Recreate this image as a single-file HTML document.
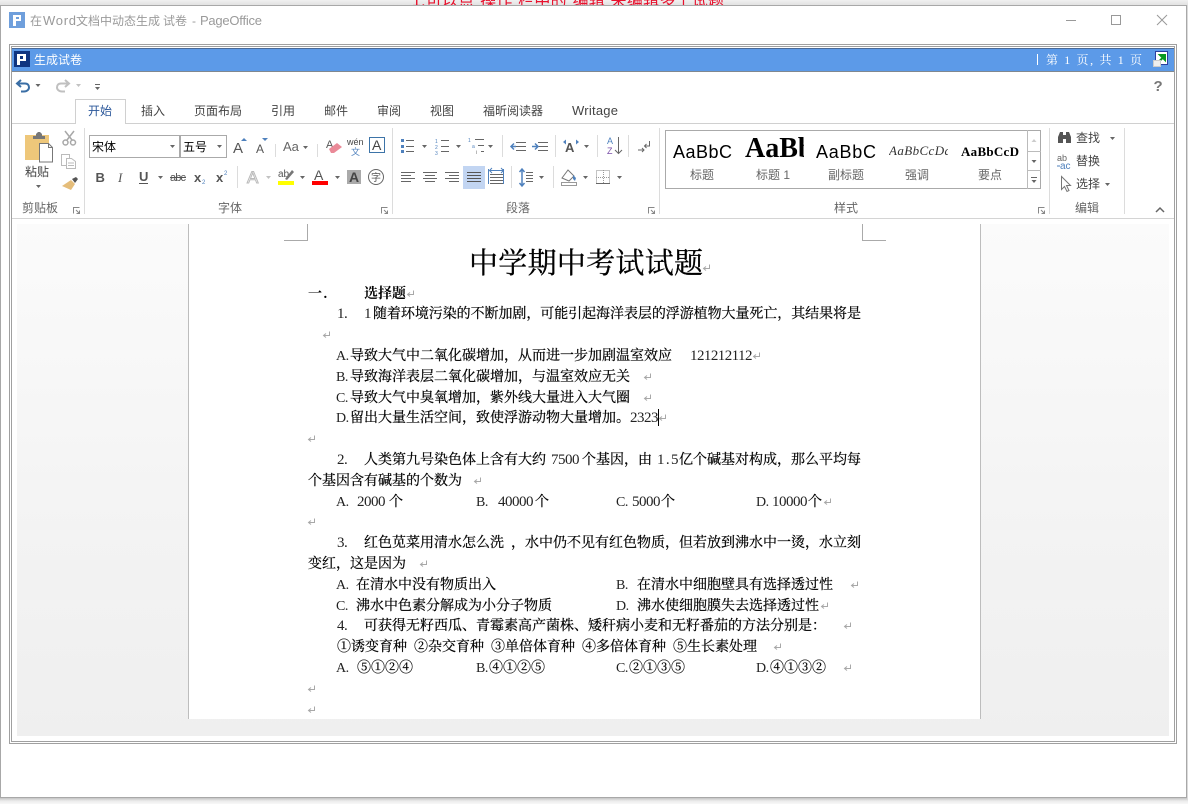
<!DOCTYPE html>
<html lang="zh"><head><meta charset="utf-8"><title>在Word文档中动态生成 试卷 - PageOffice</title>
<style>
html,body{margin:0;padding:0;background:#fff;overflow:hidden;width:1188px;height:804px}
svg{display:block}
.ui{font-family:"Liberation Sans","Noto Sans CJK SC",sans-serif;font-size:12px;fill:#444}
.g{font-family:"Liberation Sans","Noto Sans CJK SC",sans-serif;font-size:12px;fill:#666}
.d{font-family:"Noto Serif CJK SC",serif;font-size:14px;fill:#000;stroke:#000;stroke-width:.22px;white-space:pre}
.b{font-family:"Noto Serif CJK SC",serif;font-size:14px;font-weight:700;fill:#000}
.m{font-family:"Liberation Serif",serif;font-size:14px;letter-spacing:-.5px;fill:#222}
.n{font-family:"Liberation Serif",serif;font-size:15px;letter-spacing:-.5px;fill:#222}
.cr{shape-rendering:crispEdges}
</style></head><body>
<svg width="1188" height="804" viewBox="0 0 1188 804" xmlns="http://www.w3.org/2000/svg">
<defs>
<linearGradient id="top" x1="0" y1="0" x2="0" y2="1"><stop offset="0" stop-color="#f0f0f0"/><stop offset="1" stop-color="#e2e2e2"/></linearGradient>
<linearGradient id="bot" x1="0" y1="0" x2="0" y2="1"><stop offset="0" stop-color="#c4c4c4"/><stop offset=".5" stop-color="#ececec"/><stop offset="1" stop-color="#f8f8f8"/></linearGradient>
<linearGradient id="rgt" x1="0" y1="0" x2="1" y2="0"><stop offset="0" stop-color="#c8c8c8"/><stop offset="1" stop-color="#eeeeee"/></linearGradient>
<linearGradient id="doc" x1="0" y1="0" x2="0" y2="1"><stop offset="0" stop-color="#fbfbfb"/><stop offset=".6" stop-color="#f3f3f3"/><stop offset="1" stop-color="#efefef"/></linearGradient>
<path id="a" d="M0 0h5l-2.500 3z" fill="#666"/>
<path id="r" d="M6.500 .5v4h-6M3 2.500l-2.500 2 2.500 2" fill="none" stroke="#a8a8a8" stroke-width="1"/>
<path id="l" d="M.5 6.500v-6h6M3 3l3 3M6.500 3.500v3h-3" fill="none" stroke="#888" stroke-width="1"/>
</defs>

<!-- backdrop -->
<rect width="1188" height="804" fill="#fff"/>
<rect width="1188" height="5" fill="url(#top)"/>
<text x="412" y="6" font-family="Liberation Sans,Noto Sans CJK SC,sans-serif" font-size="16" fill="#e8112d" textLength="312">1.可以点“操作”栏中的“编辑”来编辑多个试题</text>
<rect x="0" y="798" width="1188" height="6" fill="url(#bot)"/>
<rect x="1187" y="5" width="1" height="795" fill="url(#rgt)"/>

<!-- window -->
<rect x=".5" y="5.500" width="1186" height="792" fill="#fff" stroke="#a8a8a8" class="cr"/>
<rect x="9" y="12" width="16" height="16" fill="#6f9fdc" class="cr"/>
<path d="M13 15h8v6h-5v5h-3z" fill="#fff" class="cr"/><rect x="16" y="17" width="3" height="2" fill="#6f9fdc" class="cr"/>
<g font-family="Liberation Sans,Noto Sans CJK SC,sans-serif" font-size="12" fill="#9a9a9a">
<text x="30" y="25">在</text><text x="43" y="25" font-size="13" textLength="33">Word</text><text x="76" y="25">文档中动态生成</text><text x="163" y="25">试卷</text><text x="192" y="25">-</text><text x="200" y="25" font-size="13" textLength="62">PageOffice</text>
</g>
<path d="M1066 20.500h10" stroke="#999" class="cr"/>
<rect x="1111.500" y="15.500" width="9" height="9" fill="none" stroke="#999" class="cr"/>
<path d="M1157 15l10 10M1167 15l-10 10" stroke="#999" stroke-width="1"/>

<!-- frame -->
<rect x="9.500" y="44.500" width="1167" height="699" fill="#fff" stroke="#a0a0a0" class="cr"/>
<rect x="11.500" y="46.500" width="1163" height="695" fill="#fff" stroke="#a0a0a0" class="cr"/>

<!-- blue bar -->
<rect x="12" y="48" width="1162" height="23" fill="#5c9ae8" class="cr"/>
<rect x="12" y="48" width="1162" height="1" fill="#4a6a98" class="cr"/>
<rect x="12" y="71" width="1162" height="1" fill="#808890" class="cr"/>
<rect x="14" y="51" width="16" height="16" fill="#0f3480" class="cr"/>
<path d="M17 54h9v7h-6v4h-3z" fill="#fff" class="cr"/><rect x="20" y="56" width="3" height="3" fill="#0f3480" class="cr"/>
<text x="34" y="64" font-family="Liberation Sans,Noto Sans CJK SC,sans-serif" font-size="12" fill="#fff">生成试卷</text>
<rect x="1037" y="54" width="1" height="11" fill="#fff" class="cr"/>
<text x="1046" y="64" font-family="Liberation Serif,Noto Serif CJK SC,serif" font-size="12" fill="#fff" textLength="96" xml:space="preserve">第 1 页, 共 1 页</text>
<rect x="1155.500" y="51.500" width="12" height="13" fill="#fff" stroke="#2a3f9f" class="cr"/>
<path d="M1158.500 62l5-5M1160 55h5v5z" stroke="#0a9a20" stroke-width="2" fill="#0a9a20"/>
<rect x="1153.500" y="60.500" width="7" height="6" fill="#eee" stroke="#ccc" class="cr"/>

<!-- QAT -->
<path d="M21 80l-4 3.500 4 3.500M17 83.500h8c3 0 4 2 4 4s-2 4-5 4h-3" fill="none" stroke="#3a6ea5" stroke-width="2"/>
<use href="#a" x="35.500" y="84"/>
<path d="M65 80l4 3.500-4 3.500M69 83.500h-8c-3 0-4 2-4 4s2 4 5 4h3" fill="none" stroke="#c0c0c0" stroke-width="2"/>
<use href="#a" x="76" y="84" opacity=".4"/>
<rect x="95" y="84" width="5" height="1" fill="#666" class="cr"/><use href="#a" x="95" y="87"/>
<text x="1153.500" y="91" font-family="Liberation Sans,sans-serif" font-size="15" font-weight="700" fill="#777">?</text>

<!-- tabs -->
<path d="M12 123.500h63.500v-24h50v24H1174" fill="none" stroke="#d0d0d0" class="cr"/>
<text x="88" y="115" class="ui" style="fill:#2b579a">开始</text>
<text x="141" y="115" class="ui">插入</text>
<text x="194" y="115" class="ui">页面布局</text>
<text x="271" y="115" class="ui">引用</text>
<text x="324" y="115" class="ui">邮件</text>
<text x="377" y="115" class="ui">审阅</text>
<text x="430" y="115" class="ui">视图</text>
<text x="483" y="115" class="ui">福昕阅读器</text>
<text x="572" y="115" class="ui" style="font-size:13px" textLength="46">Writage</text>

<!-- ribbon separators -->
<g fill="#dcdcdc" class="cr">
<rect x="84" y="128" width="1" height="86"/><rect x="392" y="128" width="1" height="86"/><rect x="659" y="128" width="1" height="86"/><rect x="1049" y="128" width="1" height="86"/><rect x="1124" y="128" width="1" height="86"/>
<rect x="275" y="144" width="1" height="13"/><rect x="317" y="144" width="1" height="13"/>
<rect x="237" y="166" width="1" height="22"/>
<rect x="502" y="135" width="1" height="22"/><rect x="555" y="135" width="1" height="22"/><rect x="597" y="135" width="1" height="22"/><rect x="628" y="135" width="1" height="22"/>
<rect x="511" y="166" width="1" height="22"/><rect x="553" y="166" width="1" height="22"/>
</g>
<rect x="12" y="218" width="1162" height="1" fill="#d4d4d4" class="cr"/>

<!-- clipboard -->
<path d="M25 135h24v25H25z" fill="#eec77a" class="cr"/>
<path d="M33 136h3v-2l2-2h2l2 2v2h3v3H33z" fill="#777"/>
<path d="M39.500 143.500h9l4 4v14.500h-13z" fill="#fff" stroke="#777"/>
<path d="M48.500 143.500v4h4" fill="none" stroke="#777"/>
<text x="25" y="176" class="ui">粘贴</text>
<use href="#a" x="36" y="185"/>
<g fill="none" stroke="#a8a8a8" stroke-width="1.500">
<path d="M65 131l7 9M74 131l-7 9"/><circle cx="65.500" cy="142.500" r="2.500"/><circle cx="73" cy="142.500" r="2.500"/>
</g>
<g fill="#fff" stroke="#bbb"><path d="M61.500 154.500h8v11h-8z"/><path d="M66.500 158.500h5l4 3v7h-9z"/><path d="M68 163h6M68 165.500h6" fill="none"/></g>
<path d="M72 179l4-2 2 2-3 4z" fill="#555"/><path d="M71 180l4 4-4 6-9-4z" fill="#e5bd7a"/>
<text x="22" y="212" class="g">剪贴板</text><use href="#l" x="73" y="207"/>

<!-- font -->
<rect x="89.500" y="135.500" width="90" height="22" fill="#fff" stroke="#aaa" class="cr"/>
<rect x="180.500" y="135.500" width="46" height="22" fill="#fff" stroke="#aaa" class="cr"/>
<text x="92" y="151" font-family="Noto Sans CJK SC,sans-serif" font-size="12" fill="#000">宋体</text>
<text x="183" y="151" font-family="Noto Sans CJK SC,sans-serif" font-size="12" fill="#000">五号</text>
<use href="#a" x="170" y="145"/><use href="#a" x="217" y="145"/>
<text x="233" y="153" font-family="Liberation Sans,sans-serif" font-size="15" fill="#555">A</text>
<path d="M241 141l3-3 3 3z" fill="#4f81bd"/>
<text x="256" y="153" font-family="Liberation Sans,sans-serif" font-size="12" fill="#555">A</text>
<path d="M262 138h6l-3 3z" fill="#4f81bd"/>
<text x="283" y="151" font-family="Liberation Sans,sans-serif" font-size="13" fill="#666">Aa</text><use href="#a" x="303" y="146"/>
<text x="326" y="148" font-family="Liberation Sans,sans-serif" font-size="11" fill="#555">A</text>
<path d="M329 149l8-6 5 4-8 6h-3z" fill="#ea8a98"/>
<text x="347" y="145" font-family="Liberation Sans,sans-serif" font-size="9" fill="#444">wén</text>
<text x="351" y="155" font-family="Noto Sans CJK SC,sans-serif" font-size="9" fill="#4f81bd">文</text>
<rect x="369.500" y="137.500" width="15" height="15" fill="#fff" stroke="#3d74a8" class="cr"/>
<text x="372" y="150" font-family="Liberation Sans,sans-serif" font-size="14" fill="#444">A</text>

<text x="95.500" y="182" font-family="Liberation Sans,sans-serif" font-size="13" font-weight="700" fill="#555">B</text>
<text x="118" y="182" font-family="Liberation Serif,serif" font-size="13" font-style="italic" fill="#555">I</text>
<text x="139" y="181" font-family="Liberation Sans,sans-serif" font-size="13" font-weight="700" fill="#555">U</text>
<rect x="139" y="183" width="9" height="1" fill="#555" class="cr"/>
<use href="#a" x="158" y="176"/>
<text x="170" y="181" font-family="Liberation Sans,sans-serif" font-size="11" fill="#555" textLength="16">abc</text>
<rect x="170" y="177" width="16" height="1" fill="#555" class="cr"/>
<text x="194" y="182" font-family="Liberation Sans,sans-serif" font-size="13" font-weight="700" fill="#555">x</text>
<text x="202" y="184" font-family="Liberation Sans,sans-serif" font-size="6" fill="#4f81bd">2</text>
<text x="216" y="182" font-family="Liberation Sans,sans-serif" font-size="13" font-weight="700" fill="#555">x</text>
<text x="224" y="175" font-family="Liberation Sans,sans-serif" font-size="6" fill="#4f81bd">2</text>
<text x="247" y="183" font-family="Liberation Sans,sans-serif" font-size="17" fill="#fff" stroke="#bbb" stroke-width="1">A</text>
<use href="#a" x="266" y="176" opacity=".4"/>
<text x="278" y="177" font-family="Liberation Sans,sans-serif" font-size="10" fill="#555">ab</text>
<path d="M285 179l7-9 2 2-7 8z" fill="#777"/>
<rect x="278" y="181" width="16" height="4" fill="#ff0" class="cr"/>
<use href="#a" x="300" y="176"/>
<text x="314" y="180" font-family="Liberation Sans,sans-serif" font-size="14" fill="#555">A</text>
<rect x="312" y="181" width="16" height="4" fill="#f00" class="cr"/>
<use href="#a" x="335" y="176"/>
<rect x="347" y="170" width="14" height="14" fill="#aaa" class="cr"/>
<text x="349" y="182" font-family="Liberation Sans,sans-serif" font-size="14" font-weight="700" fill="#444">A</text>
<circle cx="376" cy="177" r="7.500" fill="none" stroke="#666"/>
<text x="371" y="181" font-family="Noto Sans CJK SC,sans-serif" font-size="10" fill="#555">字</text>
<text x="218" y="212" class="g">字体</text><use href="#l" x="381" y="207"/>

<!-- paragraph -->
<g class="cr">
<g fill="#4f81bd"><rect x="401" y="139" width="3" height="3"/><rect x="401" y="145" width="3" height="3"/><rect x="401" y="150" width="3" height="3"/></g>
<path d="M406 140.500h8M406 146.500h8M406 151.500h8" stroke="#666"/>
<path d="M441 140.500h8M441 146.500h8M441 151.500h8" stroke="#666"/>
<path d="M475 139.500h9M478 145.500h6M481 151.500h3" stroke="#666"/>
</g>
<use href="#a" x="422" y="145"/><use href="#a" x="456" y="145"/><use href="#a" x="488" y="145"/>
<g font-family="Liberation Sans,sans-serif" font-size="5" fill="#4f81bd"><text x="435" y="143">1</text><text x="435" y="149">2</text><text x="435" y="155">3</text><text x="468" y="142">1</text><text x="472" y="148">a</text><text x="476" y="154" fill="#666">i</text></g>
<path d="M516 142.500h10M516 146.500h10M516 150.500h10M538 142.500h10M538 146.500h10M538 150.500h10" stroke="#666" class="cr"/>
<path d="M516 146.500h-5M514 143.500l-3 3 3 3M532 146.500h6M535 143.500l3 3-3 3" fill="none" stroke="#4f81bd" stroke-width="1.500"/>
<text x="565" y="152" font-family="Liberation Sans,sans-serif" font-size="13" font-weight="700" fill="#555">A</text>
<path d="M563 142l3-2.500v5zM579 142l-3-2.500v5z" fill="#4f81bd"/>
<use href="#a" x="584" y="145"/>
<text x="607" y="144" font-family="Liberation Sans,sans-serif" font-size="9" fill="#4f81bd">A</text>
<text x="607" y="154" font-family="Liberation Sans,sans-serif" font-size="9" fill="#7a4fa8">Z</text>
<path d="M618.500 137v16M615 150l3.500 3.500 3.500-3.500" fill="none" stroke="#666"/>
<path d="M649.500 141v5h-5M646.500 144l-2 2 2 2M638 150h6M642 148l2 2-2 2" fill="none" stroke="#666"/>

<path d="M401 172.500h14M401 175.500h10M401 178.500h14M401 181.500h10" stroke="#666" class="cr"/>
<path d="M423 172.500h14M425 175.500h10M423 178.500h14M425 181.500h10" stroke="#666" class="cr"/>
<path d="M445 172.500h14M449 175.500h10M445 178.500h14M449 181.500h10" stroke="#666" class="cr"/>
<rect x="463" y="166" width="22" height="23" fill="#c2d5f2" class="cr"/>
<path d="M467 172.500h14M467 175.500h14M467 178.500h14M467 181.500h14" stroke="#555" class="cr"/>
<path d="M488.500 169v15M503.500 169v15" stroke="#4f81bd" class="cr"/>
<path d="M490 170.500h13M492 168l-2.500 2.500 2.500 2.500M501 168l2.500 2.500-2.500 2.500" fill="none" stroke="#4f81bd"/>
<path d="M490 174.500h13M490 177.500h13M490 180.500h13M490 183.500h13" stroke="#666" class="cr"/>
<path d="M522 170v15M519.500 172l2.500-3 2.500 3M519.500 183l2.500 3 2.500-3" fill="none" stroke="#4f81bd" stroke-width="1.500"/>
<path d="M526 172.500h7M526 175.500h7M526 178.500h7M526 181.500h7" stroke="#666" class="cr"/>
<use href="#a" x="539" y="176"/>
<path d="M562 178l6-8 6 6-5 5z" fill="#fff" stroke="#777"/><path d="M573 175l3 3-1 3-2-2z" fill="#4f81bd"/>
<rect x="561.500" y="182.500" width="15" height="3" fill="#fff" stroke="#999" class="cr"/>
<use href="#a" x="583" y="176"/>
<rect x="596.500" y="170.500" width="13" height="13" fill="none" stroke="#888" stroke-dasharray="1 1" class="cr"/>
<path d="M603.500 170v14M596 177.500h14" stroke="#999" stroke-dasharray="1 1" class="cr"/>
<path d="M596 183.500h14" stroke="#666" class="cr"/>
<use href="#a" x="617" y="176"/>
<text x="506" y="212" class="g">段落</text><use href="#l" x="648" y="207"/>

<!-- styles -->
<rect x="665.500" y="130.500" width="375" height="58" fill="#fff" stroke="#aaa" class="cr"/>
<path d="M1027.500 130v59M1028 151.500h13M1028 170.500h13" stroke="#bbb" class="cr"/>
<path d="M1031.500 142l2.500-3 2.500 3z" fill="#ccc"/><use href="#a" x="1031.500" y="160"/>
<rect x="1031" y="177" width="6" height="1" fill="#666" class="cr"/><use href="#a" x="1031.500" y="180"/>
<text x="673" y="158" font-family="Liberation Sans,sans-serif" font-size="18" fill="#000" textLength="59">AaBbC</text>
<svg x="745" y="130" width="59" height="40"><text x="0" y="27" font-family="Liberation Serif,serif" font-size="28" font-weight="700" fill="#000">AaBbC</text></svg>
<text x="816" y="158" font-family="Liberation Sans,sans-serif" font-size="18" fill="#000" textLength="60">AaBbC</text>
<svg x="889" y="130" width="59" height="40"><text x="0" y="25" font-family="Liberation Serif,serif" font-size="13" font-style="italic" fill="#333" textLength="62">AaBbCcDd</text></svg>
<text x="961" y="156" font-family="Liberation Serif,serif" font-size="13" font-weight="700" fill="#000" textLength="58">AaBbCcD</text>
<text x="690" y="179" class="g">标题</text>
<text x="756" y="179" class="g">标题 1</text>
<text x="828" y="179" class="g">副标题</text>
<text x="905" y="179" class="g">强调</text>
<text x="978" y="179" class="g">要点</text>
<text x="834" y="212" class="g">样式</text><use href="#l" x="1038" y="207"/>

<!-- editing -->
<path d="M1058 143v-6l2-5h3v11zM1066 143v-11h3l2 5v6zM1063 135h3v4h-3z" fill="#555"/>
<text x="1076" y="142" class="ui">查找</text><use href="#a" x="1110" y="137"/>
<text x="1057" y="161" font-family="Liberation Sans,sans-serif" font-size="9" fill="#666">ab</text>
<text x="1060" y="169" font-family="Liberation Sans,sans-serif" font-size="10" fill="#4f81bd">ac</text>
<path d="M1057 166h3" stroke="#4f81bd"/>
<text x="1076" y="165" class="ui">替换</text>
<path d="M1061.500 176.500v13l3-3 2.500 5 2-1-2.500-5h4z" fill="#fff" stroke="#777"/>
<text x="1076" y="188" class="ui">选择</text><use href="#a" x="1105" y="183"/>
<text x="1075" y="212" class="g">编辑</text>
<path d="M1156 212l4-4 4 4" fill="none" stroke="#666" stroke-width="1.500"/>

<!-- document background -->
<rect x="17" y="224" width="1152" height="512" fill="url(#doc)" class="cr"/>
<rect x="189" y="219" width="791" height="500" fill="#fff" class="cr"/>
<rect x="188" y="224" width="1" height="495" fill="#bdbdbd" class="cr"/>
<rect x="980" y="224" width="1" height="495" fill="#bdbdbd" class="cr"/>
<path d="M284 240.500h23.500V224M886 240.500h-23.500V224" fill="none" stroke="#aaa" class="cr"/>

<!-- document text -->
<text x="469" y="273" font-family="Noto Serif CJK SC,serif" font-size="29" fill="#000" stroke="#000" stroke-width=".3" textLength="234">中学期中考试试题</text><use href="#r" x="703" y="264"/>
<text x="308" y="298" class="b">一</text><text x="323" y="298" class="b">.</text>
<text x="364" y="298" class="b">选择题</text><use href="#r" x="407" y="290"/>

<text x="337" y="318" class="n">1.</text>
<text x="364" y="318" class="n">1</text>
<text x="373" y="318" class="d" textLength="488">随着环境污染的不断加剧，可能引起海洋表层的浮游植物大量死亡，其结果将是</text>
<use href="#r" x="323" y="331"/>

<text x="336" y="360" class="m">A.</text><text x="350" y="360" class="d">导致大气中二氧化碳增加，从而进一步加剧温室效应</text>
<text x="690" y="360" class="n" textLength="62">121212112</text><use href="#r" x="753" y="352"/>
<text x="336" y="381" class="m">B.</text><text x="350" y="381" class="d">导致海洋表层二氧化碳增加，与温室效应无关</text><use href="#r" x="644" y="373"/>
<text x="336" y="402" class="m">C.</text><text x="350" y="402" class="d">导致大气中臭氧增加，紫外线大量进入大气圈</text><use href="#r" x="644" y="394"/>
<text x="336" y="422" class="m">D.</text><text x="350" y="422" class="d">留出大量生活空间，致使浮游动物大量增加。</text><text x="630" y="422" class="n" textLength="28">2323</text>
<rect x="658" y="409" width="1" height="17" fill="#000" class="cr"/><use href="#r" x="659" y="414"/>
<use href="#r" x="308" y="435"/>

<text x="337" y="464" class="n">2.</text>
<text x="364" y="464" class="d">人类第九号染色体上含有大约</text><text x="551" y="464" class="n" textLength="28">7500</text>
<text x="582" y="464" class="d">个基因，由</text><text x="657" y="464" class="n" textLength="21">1.5</text>
<text x="679" y="464" class="d">亿个碱基对构成，那么平均每</text>
<text x="308" y="485" class="d">个基因含有碱基的个数为</text><use href="#r" x="474" y="477"/>
<text x="336" y="506" class="m">A.</text><text x="357" y="506" class="n" textLength="28">2000</text><text x="389" y="506" class="d">个</text>
<text x="476" y="506" class="m">B.</text><text x="498" y="506" class="n" textLength="35">40000</text><text x="535" y="506" class="d">个</text>
<text x="616" y="506" class="m">C.</text><text x="632" y="506" class="n" textLength="28">5000</text><text x="661" y="506" class="d">个</text>
<text x="756" y="506" class="m">D.</text><text x="772" y="506" class="n" textLength="35">10000</text><text x="808" y="506" class="d">个</text><use href="#r" x="824" y="498"/>
<use href="#r" x="308" y="518"/>

<text x="337" y="547" class="n">3.</text>
<text x="364" y="547" class="d">红色苋菜用清水怎么洗</text><text x="511" y="547" class="d">，水中仍不见有红色物质，但若放到沸水中一烫，水立刻</text>
<text x="308" y="568" class="d">变红，这是因为</text><use href="#r" x="420" y="560"/>
<text x="336" y="589" class="m">A.</text><text x="356" y="589" class="d">在清水中没有物质出入</text>
<text x="616" y="589" class="m">B.</text><text x="637" y="589" class="d">在清水中细胞壁具有选择透过性</text><use href="#r" x="851" y="581"/>
<text x="336" y="610" class="m">C.</text><text x="356" y="610" class="d">沸水中色素分解成为小分子物质</text>
<text x="616" y="610" class="m">D.</text><text x="637" y="610" class="d">沸水使细胞膜失去选择透过性</text><use href="#r" x="821" y="602"/>
<text x="337" y="630" class="n">4.</text>
<text x="364" y="630" class="d">可获得无籽西瓜、青霉素高产菌株、矮秆病小麦和无籽番茄的方法分别是：</text><use href="#r" x="844" y="622"/>
<text x="337" y="651" class="d">①诱变育种</text><text x="414" y="651" class="d">②杂交育种</text><text x="491" y="651" class="d">③单倍体育种</text><text x="582" y="651" class="d">④多倍体育种</text><text x="673" y="651" class="d">⑤生长素处理</text><use href="#r" x="774" y="643"/>
<text x="336" y="672" class="m">A.</text><text x="357" y="672" class="d">⑤①②④</text>
<text x="476" y="672" class="m">B.</text><text x="489" y="672" class="d">④①②⑤</text>
<text x="616" y="672" class="m">C.</text><text x="629" y="672" class="d">②①③⑤</text>
<text x="756" y="672" class="m">D.</text><text x="770" y="672" class="d">④①③②</text><use href="#r" x="844" y="664"/>
<use href="#r" x="308" y="685"/>
<use href="#r" x="308" y="706"/>
</svg>
</body></html>
